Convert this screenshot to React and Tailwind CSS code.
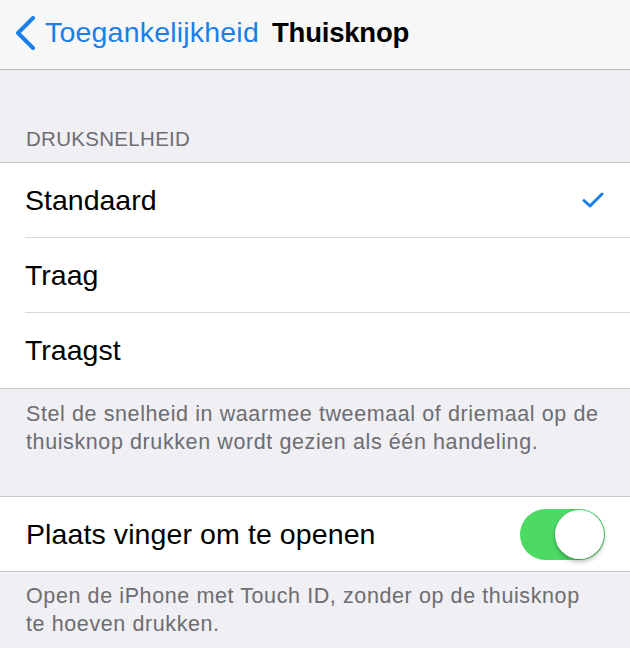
export default function App() {
  const font = { fontFamily: '"Liberation Sans", Arial, sans-serif' };
  const options = [
    { label: "Standaard", checked: true },
    { label: "Traag", checked: false },
    { label: "Traagst", checked: false },
  ];

  return (
    <div className="w-[630px] h-[648px] overflow-hidden bg-[#efeff4]" style={font}>
      {/* Navigation bar */}
      <div className="h-[70px] bg-[#f7f7f8] border-b border-[#b9b9be] flex items-center pb-[4px]">
        <svg width="24" height="34" viewBox="0 0 24 34" className="ml-[13px]">
          <path d="M20 2 L5 17 L20 32" fill="none" stroke="#1a7fe8" strokeWidth="4" strokeLinecap="round" strokeLinejoin="round" />
        </svg>
        <span className="ml-[8px] text-[28.5px] text-[#1a7fe8] leading-none tracking-[0.2px]">Toegankelijkheid</span>
        <span className="ml-[13px] text-[27.5px] font-bold text-black leading-none tracking-[-0.2px]">Thuisknop</span>
      </div>

      {/* Section header */}
      <div className="h-[92px] flex items-end pb-[13px] pl-[26px]">
        <span className="text-[20.5px] text-[#6d6d72] leading-none tracking-[0.3px]">DRUKSNELHEID</span>
      </div>

      {/* Option list */}
      <div className="bg-white border-y border-[#c8c7cc]">
        {options.map((o, i) => (
          <div key={o.label} className="pl-[25px]">
            <div
              className={
                "h-[75px] flex items-center justify-between pr-[26px] " +
                (i < options.length - 1 ? "border-b border-[#d8d8dc]" : "")
              }
            >
              <span className="text-[28.5px] text-black leading-none">{o.label}</span>
              {o.checked && (
                <svg width="22" height="18" viewBox="0 0 22 18">
                  <path d="M2 9.5 L8 15 L20 3" fill="none" stroke="#1a7fe8" strokeWidth="3" strokeLinecap="round" strokeLinejoin="round" />
                </svg>
              )}
            </div>
          </div>
        ))}
      </div>

      {/* Footer note */}
      <div className="pl-[26px] pr-[14px] pt-[11px] h-[107px]">
        <p className="text-[21.5px] leading-[28px] tracking-[0.6px] text-[#6d6d72]">
          Stel de snelheid in waarmee tweemaal of driemaal op de thuisknop drukken wordt gezien als één handeling.
        </p>
      </div>

      {/* Toggle row */}
      <div className="bg-white border-y border-[#c8c7cc] h-[76px] flex items-center justify-between pl-[26px] pr-[25px]">
        <span className="text-[28.5px] text-black leading-none tracking-[0.1px]">Plaats vinger om te openen</span>
        <div className="relative w-[85px] h-[51px] rounded-full bg-[#4cd964]">
          <div className="absolute right-[1px] top-[1px] w-[49px] h-[49px] rounded-full bg-white shadow-[0_3px_4px_rgba(0,0,0,0.25),0_0_0_1px_rgba(0,0,0,0.06)]" />
        </div>
      </div>

      {/* Footer note */}
      <div className="pl-[26px] pr-[40px] pt-[10px]">
        <p className="text-[21.5px] leading-[28px] tracking-[0.6px] text-[#6d6d72]">
          Open de iPhone met Touch ID, zonder op de thuisknop te hoeven drukken.
        </p>
      </div>
    </div>
  );
}
